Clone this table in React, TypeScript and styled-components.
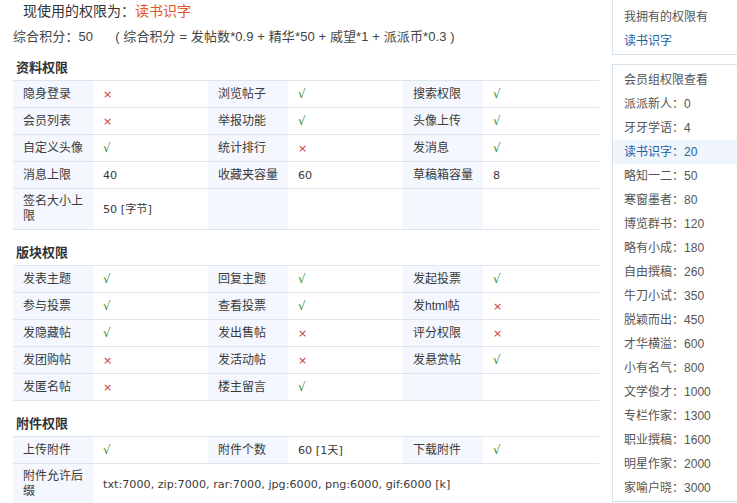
import React from "react"
import styled, { createGlobalStyle } from "styled-components"

const GlobalStyle = createGlobalStyle`
  html, body {
    margin: 0;
    padding: 0;
    background: #fff;
    overflow: hidden;
  }
  body {
    font-family: "Liberation Sans", "Noto Sans CJK SC", sans-serif;
    font-size: 12px;
    color: #333;
  }
`

type Cell = [string, boolean | string]

const profileRows: Cell[][] = [
  [["隐身登录", false], ["浏览帖子", true], ["搜索权限", true]],
  [["会员列表", false], ["举报功能", true], ["头像上传", true]],
  [["自定义头像", true], ["统计排行", false], ["发消息", true]],
  [["消息上限", "40"], ["收藏夹容量", "60"], ["草稿箱容量", "8"]],
  [["签名大小上限", "50 [字节]"], ["", ""], ["", ""]],
]

const forumRows: Cell[][] = [
  [["发表主题", true], ["回复主题", true], ["发起投票", true]],
  [["参与投票", true], ["查看投票", true], ["发html帖", false]],
  [["发隐藏帖", true], ["发出售帖", false], ["评分权限", false]],
  [["发团购帖", false], ["发活动帖", false], ["发悬赏帖", true]],
  [["发匿名帖", false], ["楼主留言", true], ["", ""]],
]

const attachRows: Cell[][] = [
  [["上传附件", true], ["附件个数", "60 [1天]"], ["下载附件", true]],
]

const levels = [
  ["派派新人", 0],
  ["牙牙学语", 4],
  ["读书识字", 20],
  ["略知一二", 50],
  ["寒窗墨者", 80],
  ["博览群书", 120],
  ["略有小成", 180],
  ["自由撰稿", 260],
  ["牛刀小试", 350],
  ["脱颖而出", 450],
  ["才华横溢", 600],
  ["小有名气", 800],
  ["文学俊才", 1000],
  ["专栏作家", 1300],
  ["职业撰稿", 1600],
  ["明星作家", 2000],
  ["家喻户晓", 3000],
] as const

const Page = styled.div`
  display: flex;
  align-items: flex-start;
  width: 760px;
`

const Main = styled.div`
  width: 586px;
  padding-left: 13px;
  flex-shrink: 0;
`

const Current = styled.div`
  padding-left: 10px;
  font-size: 14px;
  line-height: 22px;
  color: #333;
`

const Accent = styled.span`
  color: #e2552b;
`

const Score = styled.div`
  margin-top: 4px;
  font-size: 13px;
  line-height: 22px;
  color: #444;
  letter-spacing: 0.1px;
`

const Formula = styled.span`
  margin-left: 22px;
`

const SectionTitle = styled.h3<{ $first?: boolean }>`
  margin: ${(p) => (p.$first ? "10px" : "13px")} 0 2px 3px;
  font-size: 13px;
  line-height: 20px;
  font-weight: bold;
  color: #333;
`

const Table = styled.div`
  border-top: 1px solid #dce6ee;
`

const Row = styled.div`
  display: grid;
  grid-template-columns: 80px 115px 80px 115px 80px 1fr;
  border-bottom: 1px solid #dce6ee;
`

const Label = styled.div`
  background: #f4f7fd;
  padding: 5px 10px;
  line-height: 15px;
  min-height: 26px;
  box-sizing: border-box;
  display: flex;
  align-items: center;
  color: #3a3a3a;
`

const Value = styled.div<{ $span?: number }>`
  padding: 5px 10px;
  line-height: 15px;
  min-height: 26px;
  box-sizing: border-box;
  display: flex;
  align-items: center;
  font-family: "DejaVu Sans", "Noto Sans CJK SC", sans-serif;
  font-size: 11.2px;
  color: #3a3a3a;
  grid-column: span ${(p) => p.$span ?? 1};
`

const Mark = styled.span<{ $ok: boolean }>`
  color: ${(p) => (p.$ok ? "#2f8a2f" : "#cc3838")};
  font-size: ${(p) => (p.$ok ? "12px" : "11px")};
`

const Side = styled.div`
  margin-left: 13px;
  width: 150px;
  flex-shrink: 0;
`

const Box = styled.div`
  border: 1px solid #d6e2ec;
  background: #fff;
  padding: 3px 0 1px;
  & + & {
    margin-top: 9px;
  }
`

const FirstBox = styled(Box)`
  margin-top: -1px;
  padding-top: 5px;
`

const Item = styled.div<{ $active?: boolean; $link?: boolean }>`
  padding-left: 11px;
  line-height: 24px;
  color: ${(p) => (p.$link ? "#2363a3" : "#555")};
  background: ${(p) => (p.$active ? "#f1f5fc" : "transparent")};
  white-space: nowrap;
`

const renderValue = (v: boolean | string) =>
  typeof v === "boolean" ? <Mark $ok={v}>{v ? "√" : "×"}</Mark> : v

const Grid = ({ rows }: { rows: Cell[][] }) => (
  <>
    {rows.map((row, i) => (
      <Row key={i}>
        {row.map(([label, value], j) => (
          <React.Fragment key={j}>
            <Label>{label}</Label>
            <Value>{renderValue(value)}</Value>
          </React.Fragment>
        ))}
      </Row>
    ))}
  </>
)

const App = () => {
  return (
    <Page>
      <GlobalStyle />
      <Main>
        <Current>
          现使用的权限为：<Accent>读书识字</Accent>
        </Current>
        <Score>
          综合积分：50
          <Formula>( 综合积分 = 发帖数*0.9 + 精华*50 + 威望*1 + 派派币*0.3 )</Formula>
        </Score>

        <SectionTitle $first>资料权限</SectionTitle>
        <Table>
          <Grid rows={profileRows} />
        </Table>

        <SectionTitle>版块权限</SectionTitle>
        <Table>
          <Grid rows={forumRows} />
        </Table>

        <SectionTitle>附件权限</SectionTitle>
        <Table>
          <Grid rows={attachRows} />
          <Row>
            <Label>附件允许后缀</Label>
            <Value $span={5}>
              txt:7000, zip:7000, rar:7000, jpg:6000, png:6000, gif:6000 [k]
            </Value>
          </Row>
        </Table>
      </Main>

      <Side>
        <FirstBox>
          <Item>我拥有的权限有</Item>
          <Item $link>读书识字</Item>
        </FirstBox>
        <Box>
          <Item>会员组权限查看</Item>
          {levels.map(([name, score]) => (
            <Item key={name} $active={name === "读书识字"} $link={name === "读书识字"}>
              {name}：{score}
            </Item>
          ))}
        </Box>
      </Side>
    </Page>
  )
}

export default App
